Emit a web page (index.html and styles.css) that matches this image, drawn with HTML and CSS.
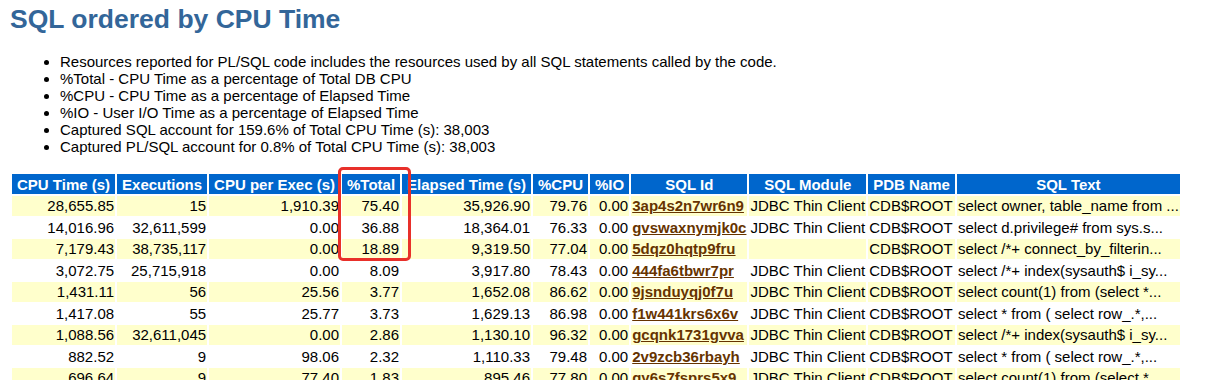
FILE: index.html
```html
<!DOCTYPE html>
<html lang="en">
<head>
    <meta charset="UTF-8">
    <title>SQL ordered by CPU Time</title>
    <link rel="stylesheet" href="styles.css">
</head>
<body>
    <h3 class="awr">SQL ordered by CPU Time</h3>
    <ul class="notes">
        <li>Resources reported for PL/SQL code includes the resources used by all SQL statements called by the code.</li>
        <li>%Total - CPU Time as a percentage of Total DB CPU</li>
        <li>%CPU - CPU Time as a percentage of Elapsed Time</li>
        <li>%IO - User I/O Time as a percentage of Elapsed Time</li>
        <li>Captured SQL account for 159.6% of Total CPU Time (s): 38,003</li>
        <li>Captured PL/SQL account for 0.8% of Total CPU Time (s): 38,003</li>
    </ul>

    <table class="awr-table">
        <tr>
            <th>CPU Time (s)</th>
            <th>Executions</th>
            <th>CPU per Exec (s)</th>
            <th class="marked">%Total<span class="highlight"></span></th>
            <th>Elapsed Time (s)</th>
            <th>%CPU</th>
            <th>%IO</th>
            <th>SQL Id</th>
            <th>SQL Module</th>
            <th>PDB Name</th>
            <th>SQL Text</th>
        </tr>
        <tr class="odd">
            <td class="num">28,655.85</td><td class="num">15</td><td class="num">1,910.39</td><td class="num">75.40</td>
            <td class="num">35,926.90</td><td class="num">79.76</td><td class="num">0.00</td>
            <td><a href="#3ap4s2n7wr6n9">3ap4s2n7wr6n9</a></td><td>JDBC Thin Client</td><td>CDB$ROOT</td>
            <td>select owner, table_name from ...</td>
        </tr>
        <tr>
            <td class="num">14,016.96</td><td class="num">32,611,599</td><td class="num">0.00</td><td class="num">36.88</td>
            <td class="num">18,364.01</td><td class="num">76.33</td><td class="num">0.00</td>
            <td><a href="#gvswaxnymjk0c">gvswaxnymjk0c</a></td><td>JDBC Thin Client</td><td>CDB$ROOT</td>
            <td>select d.privilege# from sys.s...</td>
        </tr>
        <tr class="odd">
            <td class="num">7,179.43</td><td class="num">38,735,117</td><td class="num">0.00</td><td class="num">18.89</td>
            <td class="num">9,319.50</td><td class="num">77.04</td><td class="num">0.00</td>
            <td><a href="#5dqz0hqtp9fru">5dqz0hqtp9fru</a></td><td></td><td>CDB$ROOT</td>
            <td>select /*+ connect_by_filterin...</td>
        </tr>
        <tr>
            <td class="num">3,072.75</td><td class="num">25,715,918</td><td class="num">0.00</td><td class="num">8.09</td>
            <td class="num">3,917.80</td><td class="num">78.43</td><td class="num">0.00</td>
            <td><a href="#444fa6tbwr7pr">444fa6tbwr7pr</a></td><td>JDBC Thin Client</td><td>CDB$ROOT</td>
            <td>select /*+ index(sysauth$ i_sy...</td>
        </tr>
        <tr class="odd">
            <td class="num">1,431.11</td><td class="num">56</td><td class="num">25.56</td><td class="num">3.77</td>
            <td class="num">1,652.08</td><td class="num">86.62</td><td class="num">0.00</td>
            <td><a href="#9jsnduyqj0f7u">9jsnduyqj0f7u</a></td><td>JDBC Thin Client</td><td>CDB$ROOT</td>
            <td>select count(1) from (select *...</td>
        </tr>
        <tr>
            <td class="num">1,417.08</td><td class="num">55</td><td class="num">25.77</td><td class="num">3.73</td>
            <td class="num">1,629.13</td><td class="num">86.98</td><td class="num">0.00</td>
            <td><a href="#f1w441krs6x6v">f1w441krs6x6v</a></td><td>JDBC Thin Client</td><td>CDB$ROOT</td>
            <td>select * from ( select row_.*,...</td>
        </tr>
        <tr class="odd">
            <td class="num">1,088.56</td><td class="num">32,611,045</td><td class="num">0.00</td><td class="num">2.86</td>
            <td class="num">1,130.10</td><td class="num">96.32</td><td class="num">0.00</td>
            <td><a href="#gcqnk1731gvva">gcqnk1731gvva</a></td><td>JDBC Thin Client</td><td>CDB$ROOT</td>
            <td>select /*+ index(sysauth$ i_sy...</td>
        </tr>
        <tr>
            <td class="num">882.52</td><td class="num">9</td><td class="num">98.06</td><td class="num">2.32</td>
            <td class="num">1,110.33</td><td class="num">79.48</td><td class="num">0.00</td>
            <td><a href="#2v9zcb36rbayh">2v9zcb36rbayh</a></td><td>JDBC Thin Client</td><td>CDB$ROOT</td>
            <td>select * from ( select row_.*,...</td>
        </tr>
        <tr class="odd">
            <td class="num">696.64</td><td class="num">9</td><td class="num">77.40</td><td class="num">1.83</td>
            <td class="num">895.46</td><td class="num">77.80</td><td class="num">0.00</td>
            <td><a href="#gy6s7fsprs5x9">gy6s7fsprs5x9</a></td><td>JDBC Thin Client</td><td>CDB$ROOT</td>
            <td>select count(1) from (select *...</td>
        </tr>
    </table>
</body>
</html>
```

FILE: styles.css
```css
body {
    margin: 0;
    padding: 0 10px;
    background: white;
    color: black;
    font-family: "Liberation Sans", Arial, Helvetica, sans-serif;
}

h3.awr {
    margin: 4px 0 0;
    font-size: 26.5px;
    line-height: 30px;
    font-weight: bold;
    color: #336699;
}

/* notes under the section title */
.notes {
    margin: 20px 0 17px;
    padding-left: 50px;
    font-size: 15px;
    line-height: 16.9px;
}

/* report table */
.awr-table {
    border-spacing: 2px;
    font-size: 15px;
}

.awr-table th {
    padding: 2px 5px 1px;
    line-height: 17px;
    background: #0066cc;
    color: white;
    font-weight: bold;
    white-space: nowrap;
}

.awr-table td {
    padding: 1px 1px 1.5px;
    line-height: 17px;
    white-space: nowrap;
    vertical-align: top;
}

.awr-table tr.odd td {
    background: #ffffcc;
}

.awr-table td.num {
    text-align: right;
}

.awr-table a {
    color: #663300;
    font-weight: bold;
}

/* red annotation drawn round the %Total column */
.marked {
    position: relative;
}

.highlight {
    position: absolute;
    left: -4px;
    top: -7px;
    width: 67px;
    height: 88px;
    border: 3px solid #e8302a;
    border-radius: 5px;
}
```
